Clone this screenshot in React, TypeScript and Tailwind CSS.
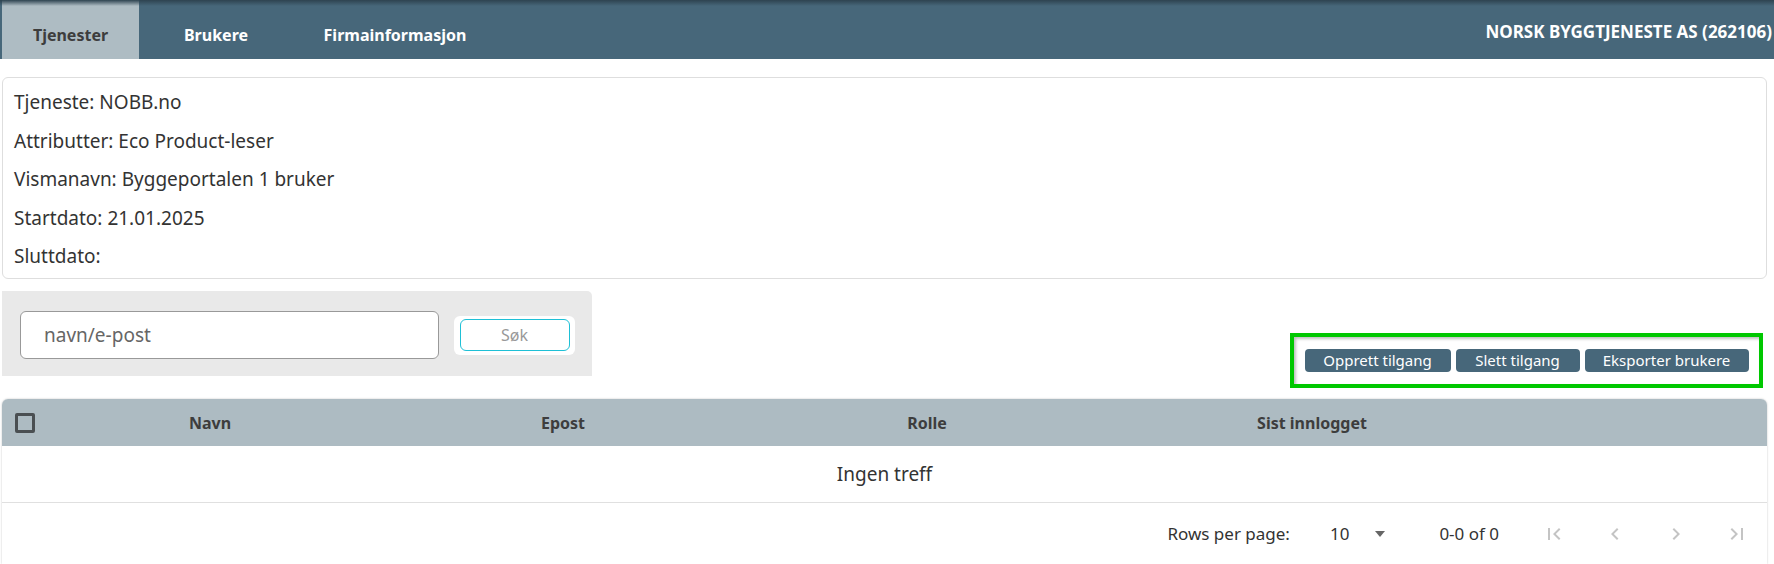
import React from 'react';

const font = { fontFamily: '"Noto Sans", "Liberation Sans", sans-serif' };

function PagerIcon({ kind }: { kind: 'first' | 'prev' | 'next' | 'last' }) {
  return (
    <svg width="24" height="24" viewBox="0 0 24 24" fill="#c4c4c4">
      {kind === 'first' && (
        <path d="M18.41 16.59L13.82 12l4.59-4.59L17 6l-6 6 6 6zM6 6h2v12H6z" />
      )}
      {kind === 'prev' && <path d="M15.41 7.41L14 6l-6 6 6 6 1.41-1.41L10.83 12z" />}
      {kind === 'next' && <path d="M10 6L8.59 7.41 13.17 12l-4.58 4.59L10 18l6-6z" />}
      {kind === 'last' && (
        <path d="M5.59 7.41L10.18 12l-4.59 4.59L7 18l6-6-6-6zM16 6h2v12h-2z" />
      )}
    </svg>
  );
}

export default function App() {
  const info = [
    'Tjeneste: NOBB.no',
    'Attributter: Eco Product-leser',
    'Vismanavn: Byggeportalen 1 bruker',
    'Startdato: 21.01.2025',
    'Sluttdato:',
  ];

  return (
    <div className="w-[1774px] h-[564px] bg-white overflow-hidden text-[#333]" style={font}>
      {/* Top nav */}
      <div className="relative h-[59px] bg-[#47677a] flex items-stretch">
        <div className="absolute inset-x-0 top-0 h-[6px] bg-gradient-to-b from-[#2e4350] to-transparent" />
        <div className="w-[137px] ml-[2px] bg-[#aebcc3] flex items-center justify-center text-[16px] font-bold text-[#3d3d3d] pt-[10px]">
          Tjenester
        </div>
        <div className="w-[154px] flex items-center justify-center text-[16px] font-bold text-white pt-[10px]">
          Brukere
        </div>
        <div className="w-[204px] flex items-center justify-center text-[16px] font-bold text-white pt-[10px]">
          Firmainformasjon
        </div>
        <div className="flex-1 flex items-center justify-end pr-[2px] text-[17px] font-bold text-white pt-[4px]">
          NORSK BYGGTJENESTE AS (262106)
        </div>
      </div>

      {/* Info card */}
      <div className="mt-[18px] ml-[2px] w-[1765px] h-[202px] border border-[#dedede] rounded-[6px] pl-[11px] pt-[12px] flex flex-col gap-[14px]">
        {info.map((line) => (
          <div key={line} className="text-[19px] leading-[24.5px] text-[#333]">
            {line}
          </div>
        ))}
      </div>

      {/* Search + actions */}
      <div className="flex items-start mt-[12px]">
        <div className="ml-[2px] w-[590px] h-[85px] bg-[#e9e9e9] rounded-tr-[5px] flex items-center pl-[18px] gap-[15px] pt-[3px]">
          <div className="w-[419px] h-[48px] bg-white border border-[#999] rounded-[6px] flex items-center pl-[23px] text-[19px] text-[#666]">
            navn/e-post
          </div>
          <div className="w-[121px] h-[39px] bg-white rounded-[6px] flex items-center justify-center">
            <div className="w-[110px] h-[32px] border border-[#1fc0d6] rounded-[6px] flex items-center justify-center text-[16px] text-[#999]">
              Søk
            </div>
          </div>
        </div>
        <div className="flex-1" />
        <div className="mt-[42px] mr-[11px] w-[473px] h-[55px] border-[4px] border-[#00c800] flex items-center justify-center gap-[5px] shadow-[inset_2px_2px_3px_rgba(0,0,0,0.25)]">
          <button className="w-[146px] h-[23px] bg-[#47677a] text-white text-[15px] rounded-[4px] leading-none">
            Opprett tilgang
          </button>
          <button className="w-[124px] h-[23px] bg-[#47677a] text-white text-[15px] rounded-[4px] leading-none">
            Slett tilgang
          </button>
          <button className="w-[164px] h-[23px] bg-[#47677a] text-white text-[15px] rounded-[4px] leading-none">
            Eksporter brukere
          </button>
        </div>
      </div>

      {/* Table */}
      <div className="mt-[11px] ml-[2px] w-[1765px] rounded-t-[6px] shadow-[0_0_2px_rgba(0,0,0,0.25)]">
        <div className="h-[47px] bg-[#adbbc2] rounded-t-[6px] grid grid-cols-[48px_320px_386px_342px_428px_1fr] items-center text-[16px] font-bold text-[#3d3d3d]">
          <div className="flex items-center pl-[13px]">
            <div className="w-[20px] h-[20px] border-[3px] border-[#4a4f52] rounded-[2px]" />
          </div>
          <div className="text-center">Navn</div>
          <div className="text-center">Epost</div>
          <div className="text-center">Rolle</div>
          <div className="text-center">Sist innlogget</div>
          <div />
        </div>
        <div className="h-[57px] border-b border-[#e0e0e0] flex items-center justify-center text-[19px] text-[#333]">
          Ingen treff
        </div>
        <div className="h-[61px] flex items-center justify-end text-[17px] text-[#333] pr-[18px]">
          <span>Rows per page:</span>
          <span className="ml-[40px]">10</span>
          <svg className="ml-[25px]" width="12" height="8" viewBox="0 0 12 8">
            <path d="M1 1h10L6 7z" fill="#666" />
          </svg>
          <span className="ml-[53px]">0-0 of 0</span>
          <div className="ml-[43px] flex items-center gap-[37px]">
            <PagerIcon kind="first" />
            <PagerIcon kind="prev" />
            <PagerIcon kind="next" />
            <PagerIcon kind="last" />
          </div>
        </div>
      </div>
    </div>
  );
}
